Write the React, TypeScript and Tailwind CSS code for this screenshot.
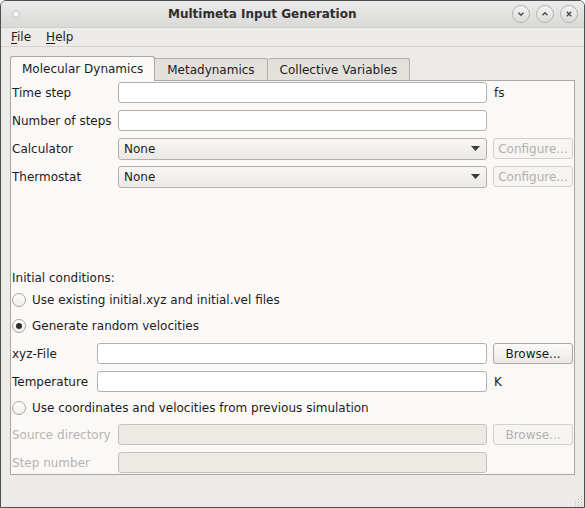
import React from "react";

const TextBox: React.FC<{ disabled?: boolean; className?: string }> = ({
    disabled,
    className,
}) => (
    <div
        className={`h-[21px] rounded-[3px] border ${
            disabled
                ? "border-[#c4c0bb] bg-[#edeae6]"
                : "border-[#b3afaa] bg-white"
        } ${className ?? ""}`}
    />
);

const PushButton: React.FC<{ label: string; disabled?: boolean }> = ({
    label,
    disabled,
}) => (
    <div
        className={`h-[21px] w-[80px] rounded-[3px] border flex items-center justify-center ${
            disabled
                ? "border-[#d3d0cc] bg-[#f7f5f2] text-[#b3b0ac]"
                : "border-[#aca8a3] bg-linear-to-b from-[#fbfaf9] to-[#ebe9e6] text-[#1c1c1c]"
        }`}
    >
        {label}
    </div>
);

const ComboBox: React.FC<{ value: string }> = ({ value }) => (
    <div className="h-[22px] w-[369px] rounded-[3px] border border-[#b3afaa] bg-linear-to-b from-[#f8f7f5] to-[#ebe9e6] flex items-center justify-between pl-[5px] pr-[6px]">
        <span>{value}</span>
        <svg width="9" height="5" viewBox="0 0 9 5">
            <path d="M0 0h9L4.5 5z" fill="#3a3a3a" />
        </svg>
    </div>
);

const Radio: React.FC<{ checked?: boolean; label: string; className?: string }> = ({
    checked,
    label,
    className,
}) => (
    <div className={`h-[20px] flex items-center ${className ?? ""}`}>
        <div className="ml-[1px] w-[14px] h-[14px] rounded-full border border-[#a8a4a0] bg-linear-to-b from-[#ffffff] to-[#f0eeeb] flex items-center justify-center">
            {checked && <div className="w-[6px] h-[6px] rounded-full bg-[#2e2e2e]" />}
        </div>
        <span className="ml-[6px]">{label}</span>
    </div>
);

const TitleButton: React.FC<{ children: React.ReactNode }> = ({ children }) => (
    <div className="w-[18px] h-[18px] rounded-full border border-[#b4b4b3] bg-linear-to-b from-[#f2f2f1] to-[#dcdcdb] flex items-center justify-center">
        <svg width="10" height="10" viewBox="0 0 10 10" fill="none" stroke="#4a4a4a" strokeWidth="1.4">
            {children}
        </svg>
    </div>
);

const Row: React.FC<{ label: string; disabled?: boolean; children: React.ReactNode; labelWidth?: string; className?: string }> = ({
    label,
    disabled,
    children,
    labelWidth = "w-[107px]",
    className,
}) => (
    <div className={`flex items-center h-[21px] ${className ?? ""}`}>
        <div className={`${labelWidth} shrink-0 pl-[1px] ${disabled ? "text-[#b7b4b0]" : ""}`}>
            {label}
        </div>
        {children}
    </div>
);

const App: React.FC = () => {
    return (
        <div className="w-[585px] h-[508px] border border-[#4f4f4f] rounded-t-[6px] overflow-hidden flex flex-col bg-[#edebe7] text-[12px] leading-[14px] text-[#1c1c1c] font-['DejaVu_Sans',sans-serif]">
            {/* title bar */}
            <div className="h-[27px] shrink-0 relative flex items-center bg-linear-to-b from-[#ebebea] to-[#d9d9d8] border-b border-[#cfcfce]">
                <div className="ml-[11px] w-[8px] h-[8px] rounded-full border border-[#c2c2c1] bg-[#f4f4f4]" />
                <div className="absolute left-[167px] top-[6px] font-bold text-[#2e2e2e]">
                    Multimeta Input Generation
                </div>
                <div className="ml-auto mr-[6px] flex gap-[6px]">
                    <TitleButton>
                        <path d="M2.5 3.8L5 6.3L7.5 3.8" />
                    </TitleButton>
                    <TitleButton>
                        <path d="M2.5 6.2L5 3.7L7.5 6.2" />
                    </TitleButton>
                    <TitleButton>
                        <path d="M2.8 2.8L7.2 7.2M7.2 2.8L2.8 7.2" />
                    </TitleButton>
                </div>
            </div>

            {/* menu bar */}
            <div className="h-[19px] shrink-0 flex items-center gap-[15px] pl-[10px] border-b border-[#d6d3cf]">
                <span>
                    <span className="underline underline-offset-2">F</span>ile
                </span>
                <span>
                    <span className="underline underline-offset-2">H</span>elp
                </span>
            </div>

            {/* tabs + panel */}
            <div className="pt-[9px] px-[9px]">
                <div className="flex items-end h-[24px]">
                    <div className="relative z-10 h-[25px] -mb-[1px] px-[11px] pt-[5px] rounded-t-[3px] border border-b-0 border-[#aaa6a1] bg-[#fbf9f7]">
                        Molecular Dynamics
                    </div>
                    <div className="h-[22px] px-[12px] pt-[4px] rounded-tr-[3px] border-t border-r border-[#b3afaa] bg-[#e4e1dd]">
                        Metadynamics
                    </div>
                    <div className="h-[22px] px-[12px] pt-[4px] rounded-t-[3px] border-t border-r border-[#b3afaa] bg-[#e4e1dd]">
                        Collective Variables
                    </div>
                </div>

                <div className="h-[395px] w-[565px] border border-[#aaa6a1] bg-[#fbf9f7] flex flex-col pr-[1px]">
                    <div className="pt-[1px] flex flex-col gap-[7px]">
                        <Row label="Time step">
                            <TextBox className="w-[369px]" />
                            <span className="ml-[7px]">fs</span>
                        </Row>
                        <Row label="Number of steps">
                            <TextBox className="w-[369px]" />
                        </Row>
                        <Row label="Calculator">
                            <ComboBox value="None" />
                            <div className="ml-[6px]">
                                <PushButton label="Configure..." disabled />
                            </div>
                        </Row>
                        <Row label="Thermostat">
                            <ComboBox value="None" />
                            <div className="ml-[6px]">
                                <PushButton label="Configure..." disabled />
                            </div>
                        </Row>
                    </div>

                    <div className="flex-1" />

                    <div className="flex flex-col pb-[1px]">
                        <div className="h-[21px] flex items-center pt-[3px] pl-[1px]">Initial conditions:</div>
                        <Radio className="mt-[3px]" label="Use existing initial.xyz and initial.vel files" />
                        <Radio className="mt-[6px]" checked label="Generate random velocities" />
                        <Row className="mt-[7px]" label="xyz-File" labelWidth="w-[86px]">
                            <TextBox className="w-[390px]" />
                            <div className="ml-[6px]">
                                <PushButton label="Browse..." />
                            </div>
                        </Row>
                        <Row className="mt-[7px]" label="Temperature" labelWidth="w-[86px]">
                            <TextBox className="w-[390px]" />
                            <span className="ml-[7px]">K</span>
                        </Row>
                        <Radio className="mt-[6px]" label="Use coordinates and velocities from previous simulation" />
                        <Row className="mt-[6px]" label="Source directory" disabled>
                            <TextBox disabled className="w-[369px]" />
                            <div className="ml-[6px]">
                                <PushButton label="Browse..." disabled />
                            </div>
                        </Row>
                        <Row className="mt-[7px]" label="Step number" disabled>
                            <TextBox disabled className="w-[369px]" />
                        </Row>
                    </div>
                </div>
            </div>

            {/* resize grip */}
            <div className="flex-1 flex items-end justify-end pr-[1px] pb-[1px]">
                <svg width="10" height="10" viewBox="0 0 10 10" fill="#b9b5b0">
                    <rect x="8" y="0" width="1" height="1" />
                    <rect x="5" y="3" width="1" height="1" />
                    <rect x="8" y="3" width="1" height="1" />
                    <rect x="2" y="6" width="1" height="1" />
                    <rect x="5" y="6" width="1" height="1" />
                    <rect x="8" y="6" width="1" height="1" />
                    <rect x="2" y="9" width="1" height="1" />
                    <rect x="5" y="9" width="1" height="1" />
                    <rect x="8" y="9" width="1" height="1" />
                </svg>
            </div>
        </div>
    );
};

export default App;
